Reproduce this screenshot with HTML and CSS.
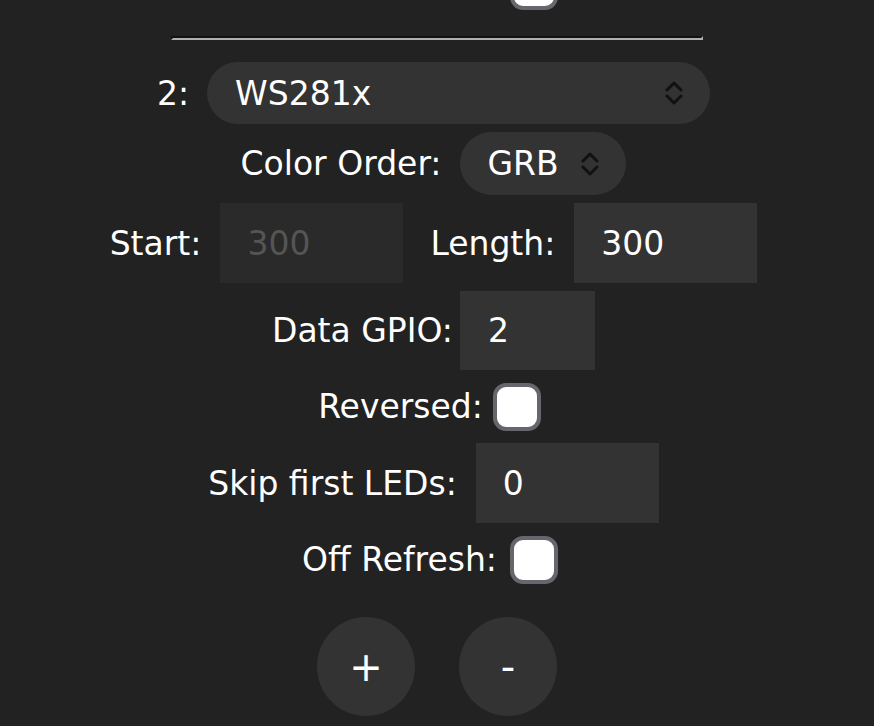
FILE: index.html
```html
<!DOCTYPE html>
<html>
<head>
<meta charset="utf-8">
<link rel="stylesheet" href="styles.css">
</head>
<body>
<div class="page">
  <div class="row row-check row-top">
    <span class="lbl">Off Refresh:</span>
    <input type="checkbox" class="chk gap13">
  </div>
  <div class="rule"></div>
  <div class="bus">
    <div class="row">
      <span class="lbl">2:</span>
      <div class="sel sel-type gap18"><span>WS281x</span>
        <svg class="arrows" width="18" height="24" viewBox="0 0 18 24"><path d="M2 9 L9 2 L16 9 M2 15 L9 22 L16 15" fill="none" stroke="#111" stroke-width="3" stroke-linecap="round" stroke-linejoin="round"/></svg>
      </div>
    </div>
    <div class="row">
      <span class="lbl">Color Order:</span>
      <div class="sel sel-order gap19"><span>GRB</span>
        <svg class="arrows" width="18" height="24" viewBox="0 0 18 24"><path d="M2 9 L9 2 L16 9 M2 15 L9 22 L16 15" fill="none" stroke="#111" stroke-width="3" stroke-linecap="round" stroke-linejoin="round"/></svg>
      </div>
    </div>
    <div class="row">
      <span class="lbl">Start:</span>
      <input class="num wide gap19" type="text" value="300" disabled>
      <span class="lbl gap27">Length:</span>
      <input class="num wide gap19" type="text" value="300">
    </div>
    <div class="row">
      <span class="lbl">Data GPIO:</span>
      <input class="num narrow gap7" type="text" value="2">
    </div>
    <div class="row row-check pr15">
      <span class="lbl">Reversed:</span>
      <input type="checkbox" class="chk gap10">
    </div>
    <div class="row">
      <span class="lbl">Skip first LEDs:</span>
      <input class="num wide gap19" type="text" value="0">
    </div>
    <div class="row row-check">
      <span class="lbl">Off Refresh:</span>
      <input type="checkbox" class="chk gap13">
    </div>
  </div>
  <div class="btns">
    <button class="circ">+</button>
    <button class="circ">-</button>
  </div>
</div>
</body>
</html>
```
FILE: styles.css
```css
html, body {
  margin: 0;
  padding: 0;
  background: #222;
  height: 100%;
  overflow: hidden;
}
body {
  font-family: "DejaVu Sans", Verdana, sans-serif;
  font-size: 33px;
  color: #fff;
}
.page {
  display: flex;
  flex-direction: column;
  align-items: center;
}
.row {
  display: flex;
  align-items: center;
  justify-content: center;
  padding-right: 7px;
  white-space: nowrap;
}
.row-check {
  height: 57px;
  padding-right: 14px;
}
.pr15 { padding-right: 15px; }
.row-top {
  margin-top: -43px;
}
.rule {
  width: 528px;
  height: 0;
  margin-top: 22px;
  border-top: 2px solid #121212;
  border-left: 2px solid #121212;
  border-bottom: 2px solid #b0b0b0;
  border-right: 2px solid #b0b0b0;
}
.bus {
  margin-top: 22px;
  display: flex;
  flex-direction: column;
  align-items: center;
  gap: 8px;
}
.gap7 { margin-left: 7px; }
.gap10 { margin-left: 10px; }
.gap13 { margin-left: 13px; }
.gap18 { margin-left: 18px; }
.gap19 { margin-left: 19px; }
.gap27 { margin-left: 27px; }
.sel {
  display: flex;
  align-items: center;
  justify-content: space-between;
  background: #333;
  border-radius: 32px;
  box-sizing: border-box;
  padding: 0 27px 0 28px;
}
.sel-type {
  width: 503px;
  height: 62px;
}
.sel-order {
  width: 166px;
  height: 63px;
  padding-left: 27px;
}
.arrows { display: block; }
.num {
  font: inherit;
  color: #fff;
  background: #333;
  border: 0;
  outline: none;
  box-sizing: border-box;
  height: 80px;
  padding: 0 0 0 27px;
  margin-top: 0;
  margin-bottom: 0;
  margin-right: 0;
}
.num:disabled {
  background: #2a2a2a;
  color: #555;
}
.wide { width: 183px; }
.narrow { width: 135px; height: 79px; padding-left: 28px; }
.chk {
  appearance: none;
  -webkit-appearance: none;
  width: 48px;
  height: 48px;
  margin-top: 0;
  margin-bottom: 0;
  margin-right: 0;
  box-sizing: border-box;
  background: #fff;
  border: 4px solid #66666c;
  border-radius: 13px;
}
.btns {
  display: flex;
  gap: 44px;
  margin-top: 29px;
}
.circ {
  width: 98px;
  height: 99px;
  border-radius: 50%;
  border: 0;
  padding: 0;
  background: #333;
  color: #fff;
  font-family: "DejaVu Sans", Verdana, sans-serif;
  font-size: 40px;
  line-height: 1;
  display: flex;
  align-items: center;
  justify-content: center;
}
```
